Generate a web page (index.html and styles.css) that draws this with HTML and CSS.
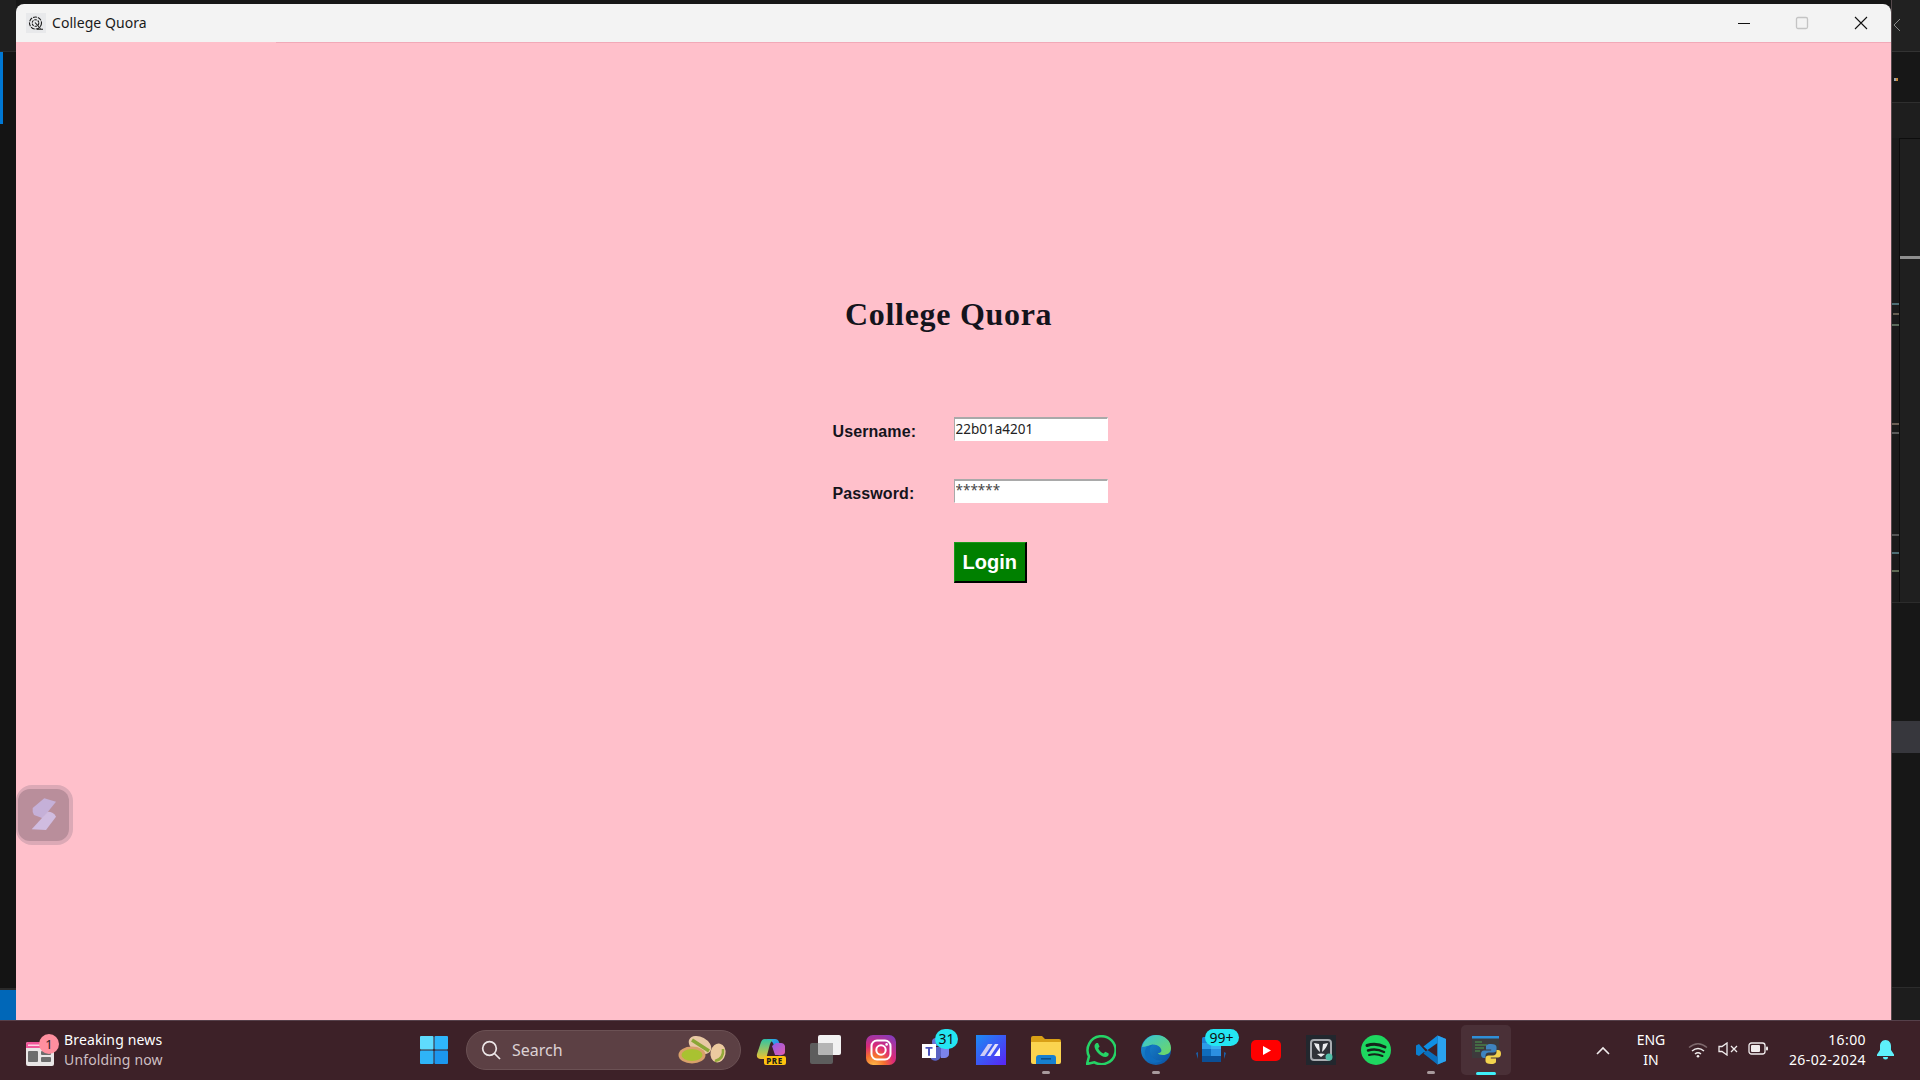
FILE: index.html
```html
<!DOCTYPE html>
<html lang="en">
<head>
<meta charset="utf-8">
<title>College Quora</title>
<link rel="stylesheet" href="styles.css">
</head>
<body>
<div class="desktop">
  <div class="upper">
    <aside class="gutter-left">
      <div class="gl-top"></div>
      <div class="gl-accent"></div>
      <div class="gl-fill"></div>
      <div class="gl-blue"></div>
    </aside>

    <main class="window">
      <header class="titlebar">
        <span class="app-icon">
          <svg width="20" height="20" viewBox="0 0 20 20" fill="none" stroke="#1b1b1b" stroke-width="1.100"><circle cx="9.500" cy="10" r="6" stroke-dasharray="4 1"/><circle cx="9.500" cy="10" r="3.300" stroke-dasharray="2.500 1"/><path d="M9 9.500l5.500 6M11 16.300h6"/></svg>
        </span>
        <span class="title-text">College Quora</span>
        <div class="controls">
          <span class="ctl"><svg width="14" height="14" viewBox="0 0 14 14"><path d="M1 7.500h12" stroke="#111" stroke-width="1"/></svg></span>
          <span class="ctl"><svg width="14" height="14" viewBox="0 0 14 14"><rect x="1.500" y="1.500" width="11" height="11" rx="1.500" fill="none" stroke="#c4c4c4" stroke-width="1.300"/></svg></span>
          <span class="ctl"><svg width="14" height="14" viewBox="0 0 14 14"><path d="M1 1l12 12M13 1L1 13" stroke="#111" stroke-width="1.100"/></svg></span>
        </div>
      </header>
      <section class="content">
        <h1 class="heading">College Quora</h1>
        <form class="login">
          <label class="lbl" for="u">Username:</label>
          <input class="field" id="u" type="text" value="22b01a4201">
          <label class="lbl" for="p">Password:</label>
          <input class="field field-pw" id="p" type="text" value="******">
          <button class="btn" type="button">Login</button>
        </form>
        <div class="floater">
          <div class="floater-in">
            <svg width="30" height="36" viewBox="0 0 30 36"><path d="M15.300 1.300L27 4.700 13.700 21.300 5 18q-2-3-1.300-7z" fill="#c5b0d8"/><path d="M18.700 14.700q6 0 8.300 5L17 33 2.700 32.300z" fill="#d0bce0"/></svg>
          </div>
        </div>
      </section>
    </main>

    <aside class="gutter-right">
      <div class="gr-top"><svg width="8" height="14" viewBox="0 0 8 14"><path d="M7 1L1 7l6 6" fill="none" stroke="#8a8a8a" stroke-width="1"/></svg></div>
      <div class="gr-sec"><i class="speck"></i></div>
      <div class="gr-mid"></div>
      <div class="gr-panel-wrap"><div class="gr-specks"></div><div class="gr-panel"><div class="gr-bar"></div></div></div>
      <div class="gr-low"></div>
      <div class="gr-sel"></div>
      <div class="gr-low2"></div>
      <div class="gr-foot"></div>
    </aside>
  </div>

  <footer class="taskbar">
    <div class="widget">
      <span class="news-icon">
        <svg width="28" height="25" viewBox="0 0 28 25"><rect y="1" width="28" height="24" rx="2" fill="#e9e6e6"/><path d="M2 1h24a2 2 0 0 1 2 2v4H0V3a2 2 0 0 1 2-2z" fill="#f0569a"/><rect x="2" y="3.500" width="16" height="1.500" fill="#ffd3e3"/><path d="M25 7h3v3h-3z" fill="#b93a2e"/><rect x="2" y="10" width="10" height="11" rx="1" fill="#6d6d6d"/><rect x="15" y="10" width="10" height="4" rx="1" fill="#6d6d6d"/><rect x="15" y="16" width="10" height="5" rx="1" fill="#6d6d6d"/></svg>
        <b class="news-badge">1</b>
      </span>
      <div class="news-text"><span class="news-1">Breaking news</span><span class="news-2">Unfolding now</span></div>
    </div>

    <span class="start">
      <svg width="30" height="30" viewBox="0 0 30 30"><rect x="1" y="1" width="13.500" height="13.500" rx="1" fill="#5fdcfe"/><rect x="15.500" y="1" width="13.500" height="13.500" rx="1" fill="#2fb6fb"/><rect x="1" y="15.500" width="13.500" height="13.500" rx="1" fill="#2fb4f7"/><rect x="15.500" y="15.500" width="13.500" height="13.500" rx="1" fill="#1c97ee"/></svg>
    </span>
    <div class="search">
      <svg width="20" height="20" viewBox="0 0 20 20" fill="none" stroke="#ece6e7" stroke-width="1.700"><circle cx="8.500" cy="8.500" r="6.800"/><path d="M13.500 13.500l5.500 5.500"/></svg>
      <span class="search-text">Search</span>
      <svg class="nuts" width="50" height="30" viewBox="0 0 50 30"><ellipse cx="22" cy="10" rx="12" ry="8" transform="rotate(28 22 10)" fill="#e8c8a4"/><path d="M14 5l17 11" stroke="#8aa636" stroke-width="3.500"/><ellipse cx="40" cy="18" rx="7.500" ry="9.500" transform="rotate(12 40 18)" fill="#ecca9f"/><path d="M37 26q9-2 8-12" stroke="#93a93a" stroke-width="2.500" fill="none"/><ellipse cx="14" cy="20" rx="13.500" ry="8.500" fill="#d9a06a"/><ellipse cx="14" cy="20" rx="10.500" ry="6" fill="#a9c231"/></svg>
    </div>

    <div class="apps">
      <span class="app">
        <svg width="30" height="24" viewBox="0 0 30 24"><defs><linearGradient id="c1" x1="0" y1="0" x2="1" y2="1"><stop offset="0" stop-color="#29b7e8"/><stop offset="1" stop-color="#2f6fe0"/></linearGradient><linearGradient id="c2" x1="0" y1="0" x2="1" y2="1"><stop offset="0" stop-color="#8d5ce8"/><stop offset="1" stop-color="#e25cb0"/></linearGradient><linearGradient id="c3" x1="0" y1="0" x2="0" y2="1"><stop offset="0" stop-color="#2fc4a4"/><stop offset="1" stop-color="#f1c22f"/></linearGradient></defs><path d="M9 1h10q3 0 4 3l4 12q-3 3-6 0L17 5q-1-2-3-2z" fill="url(#c1)"/><path d="M9 1q-3 0-4 3L1 16q-1 5 4 5h5l4-15q1-3 3-4z" fill="url(#c3)"/><path d="M20 5h5q3 0 4 3v6q0 3-4 3h-6l-3-9z" fill="url(#c2)"/></svg>
        <b class="pre">PRE</b>
      </span>
      <span class="app">
        <svg width="32" height="30" viewBox="0 0 32 30"><rect x="0" y="8" width="23" height="21" rx="2" fill="#5d5d5d"/><rect x="8" y="0" width="23" height="20" rx="2" fill="#f2f2f2"/><path d="M8 8h15v12H10a2 2 0 0 1-2-2z" fill="#b5b5b5"/></svg>
      </span>
      <span class="app">
        <svg width="30" height="30" viewBox="0 0 30 30"><defs><radialGradient id="ig" cx=".25" cy="1.050" r="1.250"><stop offset="0" stop-color="#fdc14a"/><stop offset=".3" stop-color="#f5702f"/><stop offset=".55" stop-color="#dc2a78"/><stop offset="1" stop-color="#7a3ec4"/></radialGradient></defs><rect width="30" height="30" rx="7" fill="url(#ig)"/><rect x="5.500" y="5.500" width="19" height="19" rx="5.500" fill="none" stroke="#fff" stroke-width="2"/><circle cx="15" cy="15" r="4.700" fill="none" stroke="#fff" stroke-width="2"/><circle cx="20.600" cy="9.400" r="1.300" fill="#fff"/></svg>
      </span>
      <span class="app">
        <svg width="28" height="24" viewBox="0 0 28 24"><circle cx="21" cy="6" r="3.500" fill="#7b83eb"/><circle cx="14" cy="4" r="4" fill="#6b72d8"/><path d="M9 9h10v9a6 6 0 0 1-10 3z" fill="#5a62c3"/><path d="M19 10h8v6q0 3-4 4h-4z" fill="#7b83eb"/><rect x="0" y="6" width="14" height="14" fill="#fff"/><path d="M3.500 9h7v1.700H8v7H6v-7H3.500z" fill="#4b53bc"/></svg>
        <b class="badge badge-31">31</b>
      </span>
      <span class="app">
        <svg width="30" height="30" viewBox="0 0 30 30"><defs><linearGradient id="mz" x1="0" y1="0" x2="1" y2="1"><stop offset="0" stop-color="#1c8cf4"/><stop offset="1" stop-color="#5a24f5"/></linearGradient></defs><rect width="30" height="30" fill="url(#mz)"/><path d="M4 21L12 9h4.500L8.500 21z" fill="#cfcdf5"/><path d="M11 21l8-12h3.500l-8 12z" fill="#e4e2fb"/><path d="M18 21l6-8.500V21z" fill="#fff"/></svg>
      </span>
      <span class="app">
        <svg width="30" height="28" viewBox="0 0 30 28"><path d="M0 2q0-2 2-2h9l3 3h14q2 0 2 2v4H0z" fill="#d9a016"/><path d="M0 6h30v20q0 2-2 2H2q-2 0-2-2z" fill="#fbd44f"/><path d="M5 22q0-3 3-3h14q3 0 3 3v6H5z" fill="#1780d0"/><rect x="10" y="22" width="10" height="1.600" fill="#0b4f8a"/></svg>
      </span>
      <span class="app">
        <svg width="30" height="30" viewBox="0 0 30 30"><path d="M1 29l2-7.600A14 14 0 1 1 8.500 27.300z" fill="none" stroke="#25d366" stroke-width="2.500" stroke-linejoin="round"/><path d="M10.500 8c-1 .3-2 1.700-2 3.200 0 4 5.500 10.500 11 10.800 1.700 0 3-1.200 3.200-2.500l-.2-1.200-3.300-1.600-1.500 1.800c-2.500-.8-4.500-3-5.500-5.300l1.400-1.700L12 8z" fill="#25d366"/></svg>
      </span>
      <span class="app">
        <svg width="30" height="30" viewBox="0 0 30 30"><defs><linearGradient id="e1" x1="0" y1="0" x2="1" y2="1"><stop offset="0" stop-color="#36c3d9"/><stop offset="1" stop-color="#70d95f"/></linearGradient><linearGradient id="e2" x1="0" y1="0" x2="1" y2="1"><stop offset="0" stop-color="#1a8fd6"/><stop offset="1" stop-color="#0b4fa0"/></linearGradient></defs><circle cx="15" cy="15" r="15" fill="url(#e2)"/><path d="M1 12C3 4 9 0 15 0c9 0 15 6 15 13 0 5-4 7-8 7-3 0-5-1-5-2 3 0 4-2 3-4-1-3-5-5-9-4C6 11 2 12 1 12z" fill="url(#e1)"/><path d="M15 9c-4 0-7 3-6 8 1 6 7 10 13 8-4 3-10 4-14 1-5-4-5-11-2-14 3-2 6-3 9-3z" fill="#0f6cbd"/></svg>
      </span>
      <span class="app">
        <svg width="30" height="26" viewBox="0 0 30 26"><rect x="6" y="0" width="19" height="25" rx="1.500" fill="#1f7fd6"/><rect x="6" y="6" width="9" height="6" fill="#2c9be8"/><rect x="15" y="6" width="10" height="6" fill="#39b0f0"/><rect x="6" y="12" width="9" height="7" fill="#0f6cbd"/><rect x="15" y="12" width="10" height="7" fill="#2c8fe0"/><path d="M0 16l2-1v7h26v-7l2 1-2 6H2z" fill="#1a5fa8"/><rect x="6" y="19" width="19" height="6" fill="#0b4f96"/></svg>
        <b class="badge badge-99">99+</b>
      </span>
      <span class="app">
        <svg width="30" height="21" viewBox="0 0 30 21"><rect width="30" height="21" rx="5" fill="#f00"/><path d="M12 6l8 4.500-8 4.500z" fill="#fff"/></svg>
      </span>
      <span class="app">
        <svg width="30" height="30" viewBox="0 0 30 30"><rect width="30" height="30" fill="#22272e"/><rect x="5" y="5" width="20" height="20" rx="3" fill="#2f3339" stroke="#a9adb2" stroke-width="2"/><path d="M8 8l5 1 1 8q-4-3-6-9zM22 8l-5 1-1 8q4-3 6-9zM11 19q4-1 8 0l-4 3z" fill="#eceef0"/><circle cx="23" cy="22" r="3.500" fill="#4fbfa8"/></svg>
      </span>
      <span class="app">
        <svg width="30" height="30" viewBox="0 0 30 30"><circle cx="15" cy="15" r="15" fill="#1ed760"/><path d="M6 10.500q9-3 18 1.500" fill="none" stroke="#14241a" stroke-width="3" stroke-linecap="round"/><path d="M7 15.500q8-2.500 16 1.500" fill="none" stroke="#14241a" stroke-width="2.500" stroke-linecap="round"/><path d="M8 20q7-2 13.500 1" fill="none" stroke="#14241a" stroke-width="2" stroke-linecap="round"/></svg>
      </span>
      <span class="app">
        <svg width="30" height="30" viewBox="0 0 30 30"><path d="M21.500.500L30 4v22l-8.500 3.500L8 17l-5 4-3-1.500V10.500L3 9l18.500 20.500V.500z" fill="#0a7fd0" fill-rule="evenodd"/><path d="M21.500.500L30 4v22l-8.500 3.500z" fill="#2aa2ee"/><path d="M21.500.500V8L11.500 15 7.500 11.500z" fill="#0f8fe4"/><path d="M21.500 22L11.500 15 7.500 18.500l14 11z" fill="#0a6fbd"/></svg>
        <i class="run"></i>
      </span>
      <span class="app app-active">
        <svg width="30" height="30" viewBox="0 0 30 30"><rect x="1" y="1" width="27" height="22" fill="#3d3a3c"/><rect x="1" y="1" width="27" height="2.500" fill="#2f8fd8"/><path d="M4 7h7M4 10h12M4 13h9M4 16h5" stroke="#4f9e4f" stroke-width="1"/><g transform="translate(10 9)"><path d="M10 0C5 0 5 2 5 3v2.500h5.200v1H3c-2 0-3 1.500-3 3.700S1 14 3 14h1.500v-2.300c0-2 1.500-3.200 3.500-3.200h4.500c1.700 0 3-1.300 3-3V3c0-2-2-3-5.500-3z" fill="#3f84c0"/><path d="M10 0C5 0 5 2 5 3v2.500h5.200v1H3c-2 0-3 1.500-3 3.700S1 14 3 14h1.500v-2.300c0-2 1.500-3.200 3.500-3.200h4.500c1.700 0 3-1.300 3-3V3c0-2-2-3-5.500-3z" fill="#f3d34e" transform="rotate(180 10 10)"/></g></svg>
        <i class="active-bar"></i>
      </span>
    </div>

    <div class="tray">
      <span class="caret"><svg width="14" height="9" viewBox="0 0 14 9"><path d="M1 8l6-6 6 6" fill="none" stroke="#f1eced" stroke-width="1.600"/></svg></span>
      <div class="lang"><span>ENG</span><span>IN</span></div>
      <div class="net">
        <span class="net-i"><svg width="20" height="16" viewBox="0 0 20 16" fill="none" stroke-width="1.500"><path d="M1 5.500q9-7.500 18 0" stroke="#7d686c"/><path d="M4 9q6-5 12 0" stroke="#f1eced"/><path d="M7 12q3-2.500 6 0" stroke="#f1eced"/><circle cx="10" cy="14.300" r="1.300" fill="#f1eced" stroke="none"/></svg></span>
        <span class="net-i"><svg width="20" height="14" viewBox="0 0 20 14" fill="none" stroke="#f1eced" stroke-width="1.300"><path d="M1 4.500h3L9 1v12L4 9.500H1z"/><path d="M13 4l6 6M19 4l-6 6"/></svg></span>
        <span class="net-i"><svg width="20" height="13" viewBox="0 0 20 13"><rect x="1" y="1" width="16" height="11" rx="2.500" fill="none" stroke="#f1eced" stroke-width="1.300"/><rect x="3" y="3" width="9" height="7" rx="1" fill="#f1eced"/><rect x="18" y="4.500" width="2" height="4" rx="1" fill="#f1eced"/></svg></span>
      </div>
      <div class="clock"><span>16:00</span><span>26-02-2024</span></div>
      <span class="bell"><svg width="17" height="20" viewBox="0 0 17 20"><path d="M8.500 0C5 0 3 3 3 6v4L0 14.500V16h17v-1.500L14 10V6c0-3-2-6-5.500-6z" fill="#5ef0fa"/><path d="M6 17h5a2.500 2.500 0 0 1-5 0z" fill="#5ef0fa"/></svg></span>
    </div>
  </footer>
</div>
</body>
</html>
```
FILE: styles.css
```css
* { box-sizing: border-box; }
html, body { margin: 0; padding: 0; }
body { width: 1920px; height: 1080px; overflow: hidden; background: #161616; font-family: "Noto Sans", sans-serif; }

.desktop { display: flex; flex-direction: column; width: 1920px; height: 1080px; }
.upper { display: flex; height: 1020px; }

/* background editor behind the window */
.gutter-left { width: 16px; display: flex; flex-direction: column; background: #141414; }
.gl-top { height: 52px; background: #1f1f1f; border-bottom: 1px solid #2b2b2b; }
.gl-accent { width: 3px; height: 72px; background: #0078d4; }
.gl-fill { flex: 1; border-bottom: 2px solid #2a2a2a; }
.gl-blue { height: 30px; background: #0067b8; }

.gutter-right { width: 29px; display: flex; flex-direction: column; background: #1c1c1c; border-left: 1px solid #55494c; }
.gr-top { height: 52px; background: #212121; padding: 18px 0 0 1px; border-bottom: 1px solid #333; }
.gr-top svg { display: block; }
.gr-sec { height: 51px; background: #171717; border-bottom: 1px solid #2f2f2f; padding: 26px 0 0 2px; }
.speck { display: block; width: 4px; height: 3px; background: linear-gradient(to right, #9aa3ad 60%, #c98a3c 60%); }
.gr-mid { height: 35px; background: #1e1e1e; }
.gr-panel-wrap { height: 464px; display: flex; }
.gr-specks { width: 7px; background:
  linear-gradient(#4d6d73, #4d6d73) 0 165px / 7px 2px no-repeat,
  linear-gradient(#665f52, #665f52) 1px 175px / 6px 2px no-repeat,
  linear-gradient(#5a6a5a, #5a6a5a) 0 186px / 7px 2px no-repeat,
  linear-gradient(#6b5f55, #6b5f55) 0 285px / 7px 2px no-repeat,
  linear-gradient(#5b5b5b, #5b5b5b) 0 294px / 7px 2px no-repeat,
  linear-gradient(#555, #555) 0 396px / 7px 2px no-repeat,
  linear-gradient(#4d6d73, #4d6d73) 0 414px / 7px 2px no-repeat,
  linear-gradient(#5f6a55, #5f6a55) 0 432px / 7px 2px no-repeat,
  #1b1b1b; }
.gr-panel { flex: 1; background: #1f1f1f; border-left: 1px solid #0d0d0d; border-top: 1px solid #0d0d0d; padding-top: 117px; }
.gr-bar { height: 3px; background: #8f8f8f; }
.gr-low { height: 119px; background: #171717; border-top: 1px solid #2c2c2c; }
.gr-sel { height: 32px; background: #37373d; }
.gr-low2 { height: 234px; background: #171717; }
.gr-foot { flex: 1; background: #1d1d1d; border-top: 1px solid #2c2c2c; }

/* the app window */
.window { flex: 1; margin-top: 4px; display: flex; flex-direction: column; min-width: 0; }
.titlebar { height: 38px; flex: none; display: flex; align-items: center; padding-left: 10px; background: #f3f3f3; border-radius: 8px 8px 0 0; }
.app-icon { width: 20px; height: 20px; background: #e8e9eb; display: block; }
.app-icon svg { display: block; }
.title-text { margin: 0 0 2px 6px; font-size: 14px; letter-spacing: .05px; color: #1a1a1a; }
.controls { margin-left: auto; display: flex; padding-right: 1px; }
.ctl { width: 58.500px; height: 37px; display: flex; align-items: center; justify-content: center; }
.ctl svg { display: block; }

.content { flex: 1; position: relative; background: linear-gradient(#f2a9b8, #f2a9b8) 260px 0 / 100% 1px no-repeat, #ffc0cb; padding: 252px 0 0 817px; }
.heading { margin: 0 0 0 12px; font: bold 32px/40px "Liberation Serif", serif; letter-spacing: .7px; color: #14141c; }
.login { margin-top: 83px; display: grid; grid-template-columns: 120.500px 154.500px; grid-auto-rows: 24px; row-gap: 38px; }
.lbl { font: bold 16px/24px "Liberation Sans", sans-serif; letter-spacing: .1px; color: #14141c; padding-top: 3px; margin-left: -0.500px; }
.field { width: 154.500px; height: 24px; padding: 0 0 1px 1px; margin: 0; border: 1px solid #fff; border-top: 2px solid #a9a9a9; border-left: 1px solid #a9a9a9; border-radius: 0; background: #fff; font: 13.500px "Noto Sans", sans-serif; color: #222; outline: none; }
.field-pw { padding: 0 0 4px 1px; color: #444; }
.btn { grid-column: 2; margin-top: 1px; width: 73.500px; height: 41px; padding: 0; border-style: solid; border-color: #1a9a1a #000 #000 #1a9a1a; border-width: 1px 2px 2px 1px; border-radius: 0; background: #008000; color: #fff; font: bold 20px "Liberation Sans", sans-serif; }

.floater { position: absolute; left: 0; top: 743px; width: 57px; height: 60px; padding: 4px 4px 4px 2px; border-radius: 16px; background: #dca9b6; }
.floater-in { width: 100%; height: 100%; border-radius: 12px; background: #b98e9b; display: flex; align-items: center; justify-content: center; }
.floater-in svg { display: block; }

/* taskbar */
.taskbar { height: 60px; display: flex; align-items: center; padding-bottom: 1px; background: #3d2128; border-top: 1px solid #55404a; color: #fff; }
.widget { width: 406.500px; flex: none; display: flex; align-items: center; padding-left: 26px; }
.news-icon { position: relative; display: block; width: 28px; height: 25px; margin-top: 6px; }
.news-icon svg { display: block; }
.news-badge { position: absolute; left: 13px; top: -7px; width: 20px; height: 20px; border-radius: 50%; background: #ff8f9f; color: #2b1b1f; font: 400 13px/20px "Noto Sans", sans-serif; text-align: center; }
.news-text { margin-left: 10px; display: flex; flex-direction: column; font-size: 14px; line-height: 20px; letter-spacing: .15px; }
.news-1 { color: #fff; }
.news-2 { color: #cdbfc2; }

.start { width: 55px; flex: none; display: flex; justify-content: center; }
.start svg { display: block; }
.search { width: 275px; height: 40px; flex: none; margin: 0 2.500px 0 4.500px; display: flex; align-items: center; padding: 0 12px 0 14px; border-radius: 20px; background: #5c4044; border: 1px solid #6b5154; }
.search > svg { flex: none; display: block; }
.search-text { margin-left: 11px; font-size: 16px; color: #dcd2d4; }
.nuts { margin-left: auto; }

.apps { display: flex; }
.app { position: relative; width: 55px; height: 50px; display: flex; align-items: center; justify-content: center; }
.app > svg { display: block; }
.app-active { background: rgba(255,255,255,.07); border-radius: 5px; width: 50px; margin: 0 2.500px; }
.active-bar { position: absolute; left: 15px; bottom: 0; width: 20px; height: 3.500px; border-radius: 2px; background: #3ff0fa; }
.run { position: absolute; left: 23px; bottom: 1px; width: 8px; height: 3px; border-radius: 2px; background: #a89a9d; }
.app:nth-child(6)::after, .app:nth-child(8)::after { content: ""; position: absolute; left: 23px; bottom: 1px; width: 8px; height: 3px; border-radius: 2px; background: #a89a9d; }
.pre { position: absolute; left: 20px; top: 31px; width: 22px; height: 9px; border-radius: 2px; background: #ffc20e; color: #1c1c1c; font: 800 8px/9px "Noto Sans", sans-serif; letter-spacing: .5px; text-align: center; }
.badge { position: absolute; background: #24e6f2; color: #111; font: 400 13px/17px "Noto Sans", sans-serif; text-align: center; }
.badge-31 { left: 26.500px; top: 4px; width: 23px; height: 20px; border-radius: 10px; line-height: 20px; font-size: 14px; }
.badge-99 { left: 21px; top: 4px; width: 34px; height: 17px; border-radius: 9px; font-size: 14px; }

.tray { margin-left: auto; display: flex; align-items: center; padding-right: 22px; font-size: 14px; line-height: 20px; color: #fff; }
.caret { width: 46px; display: flex; justify-content: center; margin-right: 2px; }
.caret svg { display: block; }
.lang { width: 46px; margin-right: 9px; display: flex; flex-direction: column; align-items: center; }
.net { display: flex; margin-right: 7px; }
.net-i { width: 30px; display: flex; justify-content: center; }
.net-i svg { display: block; }
.clock { width: 86px; display: flex; flex-direction: column; align-items: flex-end; white-space: nowrap; letter-spacing: .4px; }
.bell { width: 26px; margin-left: 6px; display: flex; justify-content: center; }
.bell svg { display: block; }
```
